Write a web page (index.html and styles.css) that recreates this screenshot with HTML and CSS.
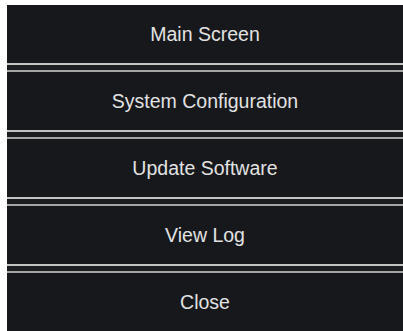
FILE: index.html
```html
<!DOCTYPE html>
<html lang="en">
<head>
    <meta charset="UTF-8">
    <meta name="viewport" content="width=device-width, initial-scale=1.0">
    <title>Menu</title>
    <link rel="stylesheet" href="styles.css">
</head>
<body>
    <div id="menu">
        <button class="menu-button">Main Screen</button>
        <div class="separator"></div>
        <button class="menu-button">System Configuration</button>
        <div class="separator"></div>
        <button class="menu-button">Update Software</button>
        <div class="separator"></div>
        <button class="menu-button">View Log</button>
        <div class="separator"></div>
        <button class="menu-button">Close</button>
    </div>
</body>
</html>
```

FILE: styles.css
```css
body {
    margin: 5px 0 0 7px;
    background-color: #ffffff;
    font-family: "Liberation Sans", Arial, sans-serif;
    overflow: hidden;
}
#menu {
    display: flex;
    flex-direction: column;
    background-color: #17181c;
}
.menu-button {
    height: 58px;
    border: none;
    background: #17181c;
    color: #e2e2e2;
    font-family: "Liberation Sans", Arial, sans-serif;
    font-size: 19.5px;
    padding: 1px 0 0 0;
    margin: 0;
    cursor: pointer;
}
.separator {
    height: 5px;
    border-top: 2px solid #c4c4c4;
    border-bottom: 2px solid #a4a4a4;
    background-color: #1c1d21;
}
```
